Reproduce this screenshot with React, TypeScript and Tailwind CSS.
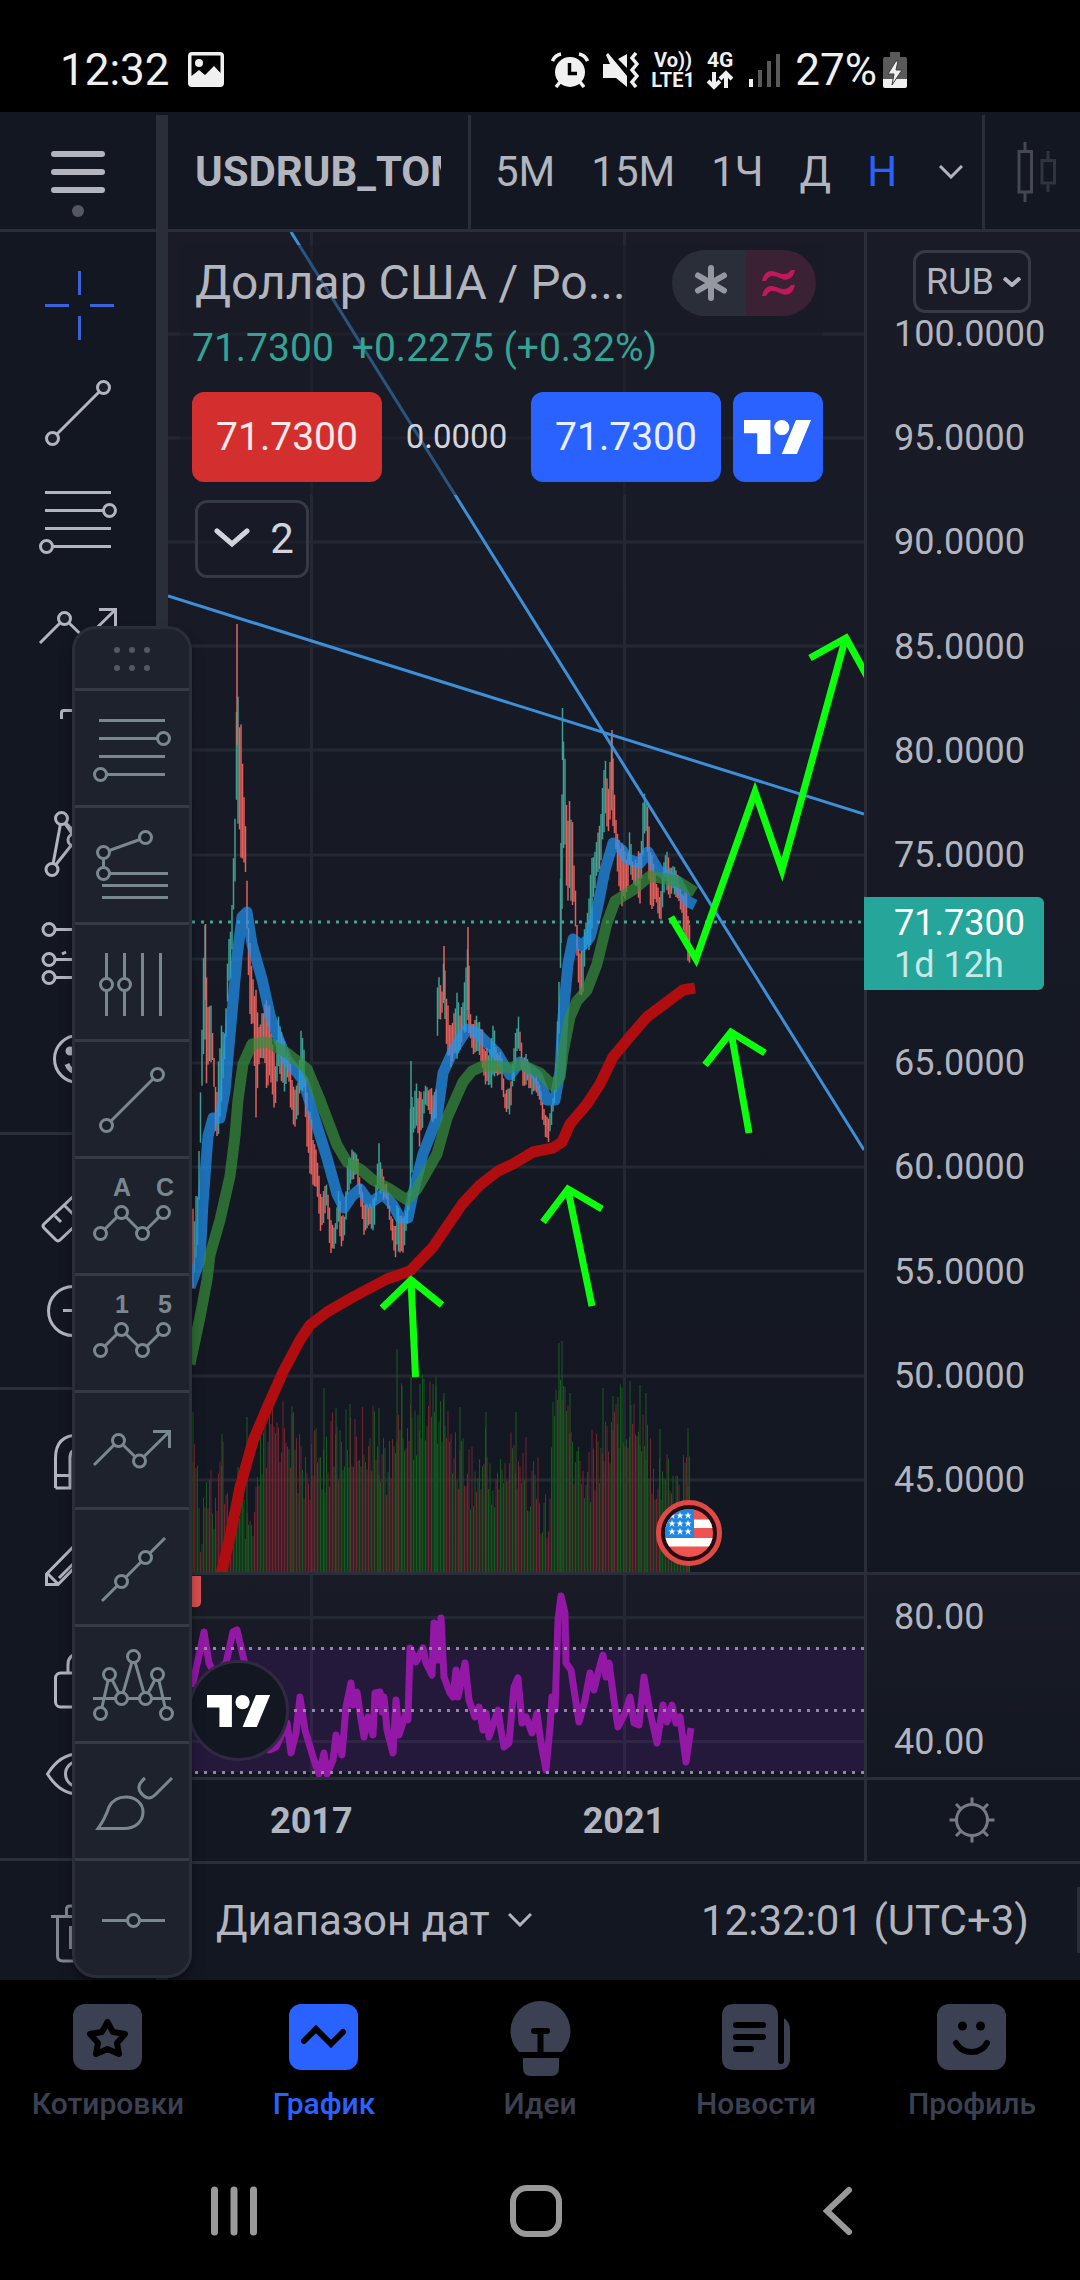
import { ReactNode } from "react";

type Point = [number, number];

const intervals = ["5М", "15М", "1Ч", "Д", "Н"];

const prices = [
  "100.0000",
  "95.0000",
  "90.0000",
  "85.0000",
  "80.0000",
  "75.0000",
  "",
  "65.0000",
  "60.0000",
  "55.0000",
  "50.0000",
  "45.0000",
];

// x, high, low
const range: [number, number, number][] = [
  [193, 1216, 1296], [198, 1190, 1238], [201, 1070, 1122], [203, 975, 1073],
  [205, 924, 1069], [207, 984, 1091], [210, 997, 1064], [213, 1029, 1069],
  [216, 1096, 1145], [219, 1051, 1127], [222, 1020, 1091], [225, 1033, 1060],
  [228, 948, 993], [231, 928, 975], [234, 850, 904], [236, 792, 850],
  [237, 624, 792], [239, 703, 859], [242, 736, 843], [243, 785, 861],
  [246, 828, 890], [248, 908, 970], [250, 939, 1015], [253, 975, 1024],
  [256, 984, 1109], [258, 1024, 1073], [263, 1011, 1055], [267, 1004, 1091],
  [270, 1011, 1093], [273, 1046, 1100], [276, 1060, 1109], [278, 1015, 1064],
  [282, 1037, 1095], [285, 1046, 1091], [288, 1055, 1073], [291, 1069, 1113],
  [294, 1091, 1129], [298, 1082, 1113], [301, 1033, 1091], [304, 1051, 1091],
  [307, 1095, 1149], [312, 1127, 1185], [317, 1158, 1189], [321, 1198, 1238],
  [324, 1189, 1220], [327, 1176, 1211], [330, 1216, 1252], [335, 1225, 1254],
  [338, 1189, 1225], [342, 1218, 1249], [345, 1211, 1234], [348, 1158, 1194],
  [352, 1149, 1180], [357, 1149, 1176], [360, 1180, 1203], [364, 1203, 1234],
  [370, 1203, 1225], [374, 1198, 1229], [377, 1171, 1189], [379, 1147, 1189],
  [383, 1176, 1198], [387, 1185, 1203], [392, 1220, 1243], [395, 1225, 1258],
  [398, 1198, 1247], [402, 1220, 1258], [407, 1203, 1229], [409, 1194, 1211],
  [411, 1061, 1207], [413, 1104, 1140], [416, 1078, 1127], [419, 1095, 1145],
  [423, 1095, 1127], [426, 1078, 1104], [429, 1091, 1113], [432, 1087, 1131],
  [436, 1091, 1118], [437, 986, 1037], [439, 979, 1024], [442, 988, 1015],
  [444, 946, 1011], [446, 988, 1037], [449, 1020, 1064], [453, 1015, 1064],
  [457, 995, 1060], [461, 1011, 1046], [465, 975, 1033], [468, 927, 1024],
  [470, 1015, 1037], [473, 1020, 1055], [477, 1017, 1051], [482, 1029, 1064],
  [485, 1046, 1091], [490, 1051, 1087], [493, 1020, 1087], [497, 1053, 1075],
  [501, 1048, 1080], [505, 1089, 1113], [510, 1089, 1113], [513, 1053, 1089],
  [517, 1022, 1053], [519, 1017, 1044], [523, 1057, 1091], [527, 1053, 1084],
  [532, 1075, 1093], [537, 1075, 1093], [541, 1089, 1106], [543, 1106, 1124],
  [548, 1120, 1147], [552, 1102, 1120], [555, 1084, 1102], [557, 1039, 1089],
  [559, 981, 1044], [561, 843, 943], [563, 708, 892], [564, 722, 814],
  [567, 812, 905], [570, 798, 901], [573, 834, 905], [576, 892, 928],
  [578, 946, 981], [580, 955, 999], [583, 946, 990], [587, 910, 946],
  [591, 865, 946], [593, 861, 901], [597, 834, 883], [600, 825, 874],
  [603, 781, 839], [605, 751, 816], [608, 789, 830], [612, 730, 816],
  [615, 810, 834], [618, 839, 883], [622, 839, 901], [627, 861, 892],
  [630, 823, 870], [633, 865, 888], [637, 856, 890], [641, 852, 905],
  [642, 812, 861], [645, 790, 830], [648, 807, 861], [651, 852, 917],
  [655, 870, 901], [660, 897, 926], [662, 883, 914], [665, 847, 879],
  [669, 861, 901], [675, 861, 892], [680, 888, 905], [683, 892, 923],
  [687, 881, 963], [689, 928, 975], [691, 910, 946],
];

const volumeTops: Point[] = [
  [192, 1433], [201, 1517], [207, 1467], [216, 1513], [223, 1467],
  [233, 1533], [239, 1487], [244, 1527], [255, 1533], [260, 1460],
  [273, 1433], [287, 1420], [301, 1467], [316, 1460], [330, 1447],
  [351, 1440], [366, 1433], [380, 1443], [391, 1473], [398, 1410],
  [409, 1427], [423, 1407], [437, 1403], [451, 1440], [466, 1460],
  [476, 1480], [487, 1453], [494, 1487], [505, 1467], [516, 1450],
  [533, 1480], [544, 1500], [547, 1553], [553, 1417], [562, 1373],
  [569, 1440], [580, 1467], [594, 1460], [605, 1440], [616, 1410],
  [633, 1413], [644, 1420], [655, 1467], [673, 1477], [680, 1487], [689, 1453],
];

const volumeSpikes: Point[] = [
  [193, 1412], [222, 1434], [247, 1417], [292, 1406], [324, 1388],
  [336, 1408], [350, 1404], [379, 1408], [397, 1349], [402, 1386],
  [411, 1377], [420, 1384], [436, 1387], [444, 1393], [460, 1407],
  [486, 1412], [516, 1412], [559, 1343], [562, 1341], [570, 1393],
  [603, 1388], [613, 1396], [618, 1397], [630, 1381], [640, 1385],
  [646, 1393], [660, 1429], [688, 1428],
];

const blueAverage: Point[] = [
  [190, 1287], [200, 1260], [203, 1203], [208, 1136], [213, 1118],
  [220, 1118], [225, 1091], [229, 1046], [233, 1002], [237, 957],
  [242, 917], [247, 912], [252, 944], [262, 979], [270, 1015], [277, 1035],
  [287, 1060], [303, 1080], [313, 1113], [327, 1158], [337, 1194],
  [344, 1208], [352, 1196], [360, 1189], [370, 1203], [383, 1194],
  [393, 1205], [400, 1218], [408, 1218], [413, 1194], [423, 1154],
  [437, 1118], [443, 1073], [453, 1051], [467, 1029], [477, 1033],
  [497, 1053], [510, 1075], [520, 1062], [537, 1075], [547, 1100],
  [555, 1100], [560, 1071], [563, 1017], [568, 964], [573, 939],
  [582, 946], [590, 937], [597, 910], [605, 870], [613, 843], [622, 850],
  [627, 859], [640, 863], [648, 852], [658, 870], [677, 881], [687, 901],
  [695, 905],
];

const greenAverage: Point[] = [
  [190, 1364], [200, 1317], [207, 1280], [210, 1255], [220, 1220],
  [230, 1176], [235, 1136], [238, 1100], [243, 1064], [252, 1044],
  [267, 1042], [287, 1053], [307, 1069], [320, 1100], [337, 1145],
  [347, 1162], [360, 1169], [373, 1180], [390, 1189], [407, 1200],
  [417, 1189], [437, 1154], [447, 1118], [463, 1082], [472, 1071],
  [483, 1066], [497, 1066], [510, 1068], [520, 1064], [540, 1073],
  [553, 1086], [560, 1077], [563, 1053], [570, 1017], [577, 1001],
  [587, 990], [597, 964], [607, 923], [615, 901], [633, 890], [650, 876],
  [677, 881], [695, 892],
];

const redAverage: Point[] = [
  [221, 1574], [230, 1537], [240, 1487], [253, 1441], [267, 1408],
  [283, 1372], [300, 1340], [310, 1325], [327, 1312], [353, 1297],
  [387, 1279], [410, 1271], [433, 1247], [463, 1203], [480, 1185],
  [498, 1171], [513, 1164], [533, 1152], [553, 1148], [562, 1142],
  [570, 1124], [587, 1104], [600, 1084], [613, 1057], [633, 1033],
  [647, 1017], [667, 1002], [683, 990], [695, 988],
];

const rsi: Point[] = [
  [192, 1687], [198, 1660], [204, 1632], [209, 1663], [214, 1673],
  [226, 1663], [233, 1632], [237, 1630], [244, 1660], [252, 1690],
  [269, 1750], [276, 1747], [287, 1723], [291, 1753], [296, 1733],
  [300, 1697], [305, 1730], [314, 1760], [319, 1774], [324, 1753],
  [327, 1774], [333, 1760], [336, 1735], [342, 1755], [346, 1707],
  [351, 1683], [353, 1705], [357, 1692], [360, 1713], [364, 1737],
  [368, 1717], [373, 1735], [375, 1693], [380, 1692], [382, 1712],
  [384, 1697], [387, 1730], [393, 1753], [396, 1700], [399, 1735],
  [406, 1713], [408, 1720], [410, 1648], [416, 1662], [423, 1648],
  [426, 1663], [432, 1675], [434, 1623], [438, 1660], [441, 1618],
  [444, 1677], [450, 1693], [453, 1697], [456, 1670], [458, 1697],
  [465, 1663], [469, 1700], [475, 1717], [479, 1707], [483, 1730],
  [486, 1713], [489, 1737], [498, 1710], [501, 1730], [504, 1747],
  [509, 1743], [514, 1687], [518, 1678], [522, 1723], [526, 1717],
  [532, 1733], [537, 1713], [541, 1743], [546, 1770], [550, 1727],
  [552, 1697], [555, 1710], [558, 1620], [561, 1596], [565, 1613],
  [566, 1663], [571, 1670], [579, 1722], [585, 1700], [590, 1673],
  [594, 1690], [598, 1673], [603, 1655], [606, 1677], [609, 1663],
  [614, 1700], [618, 1727], [625, 1713], [630, 1697], [634, 1723],
  [639, 1725], [644, 1677], [649, 1707], [657, 1743], [663, 1705],
  [667, 1722], [672, 1705], [676, 1723], [680, 1717], [686, 1762],
  [691, 1728],
];

const line = (points: Point[]) => points.map((p) => p.join(",")).join(" ");

const noise = (n: number) => {
  const v = Math.sin(n * 12.9898) * 43758.5453;
  return v - Math.floor(v);
};

const valueAt = (points: Point[], x: number) => {
  const i = points.findIndex((p) => p[0] >= x);
  if (i <= 0) return points[i === 0 ? 0 : points.length - 1][1];
  const [x0, y0] = points[i - 1];
  const [x1, y1] = points[i];
  return y0 + ((y1 - y0) * (x - x0)) / (x1 - x0);
};

const highs = range.map((r) => [r[0], r[1]] as Point);
const lows = range.map((r) => [r[0], r[2]] as Point);

const candles = Array.from({ length: 332 }, (_, i) => {
  const x = 193 + i * 1.5;
  const high = valueAt(highs, x);
  const low = valueAt(lows, x);
  const size = low - high;
  const top = high + (noise(i) - 0.3) * size * 0.3;
  const bottom = low - (noise(i + 500) - 0.3) * size * 0.3;
  const before = valueAt(highs, x - 3) + valueAt(lows, x - 3);
  const up = high + low + (noise(i + 90) - 0.5) * 60 < before;
  return { x, high: top, low: bottom, up };
});

const volumes = Array.from({ length: 332 }, (_, i) => {
  const x = 193 + i * 1.5;
  const top = valueAt(volumeTops, x) + (noise(i + 31) - 0.45) * 75;
  return { x, top: Math.min(top, 1560), up: noise(i + 7) > 0.5 };
});

const Dot = ({ x, y }: { x: number; y: number }) => (
  <circle cx={x} cy={y} r="6" className="fill-[#1a1e29]" />
);

const Icon = ({ children }: { children: ReactNode }) => (
  <svg
    className="h-[84px] w-[84px] shrink-0"
    viewBox="0 0 84 84"
    fill="none"
    stroke="currentColor"
    strokeWidth="3"
  >
    {children}
  </svg>
);

const FibIcon = () => (
  <Icon>
    <path d="M9 14.5H75M9 32.5H70M9 50.5H75M12 68.5H75" />
    <Dot x={73.5} y={32.5} />
    <Dot x={10.5} y={68.5} />
  </Icon>
);

const TrendIcon = () => (
  <Icon>
    <path d="M16.5 68.5L67.5 17.5" />
    <Dot x={67.5} y={17.5} />
    <Dot x={16.5} y={68.5} />
  </Icon>
);

const ArrowPathIcon = () => (
  <Icon>
    <path d="M4 57L28.5 32.5L49.5 53L79 24M63 23.5H79.5V40" />
    <Dot x={28.5} y={32.5} />
    <Dot x={49.5} y={53} />
  </Icon>
);

const WaveIcon = ({ first, last }: { first: string; last: string }) => (
  <Icon>
    <path d="M10.5 59.5L31.5 38.5L52.5 59.5L73.5 38.5" />
    <Dot x={10.5} y={59.5} />
    <Dot x={31.5} y={38.5} />
    <Dot x={52.5} y={59.5} />
    <Dot x={73.5} y={38.5} />
    <g
      className="fill-current font-['Liberation_Sans'] text-[25px] font-bold"
      stroke="none"
      textAnchor="middle"
    >
      <text x="32" y="22">
        {first}
      </text>
      <text x="75" y="22">
        {last}
      </text>
    </g>
  </Icon>
);

const Logo = ({ className }: { className?: string }) => (
  <svg className={className} viewBox="0 0 36 18" fill="white">
    <path d="M14 18H7V7H0V0h14v18zM28 18h-8l7.500-18h8L28 18z" />
    <circle cx="20" cy="4" r="4" />
  </svg>
);

const Chevron = ({ className }: { className?: string }) => (
  <svg
    className={className}
    viewBox="0 0 24 14"
    fill="none"
    stroke="currentColor"
    strokeWidth="3"
  >
    <path d="M1 1L12 12L23 1" />
  </svg>
);

const ToolButton = ({
  label,
  children,
}: {
  label: string;
  children: ReactNode;
}) => (
  <button
    aria-label={label}
    className="flex h-[108px] w-full items-center justify-center"
  >
    {children}
  </button>
);

const StatusBar = () => (
  <div className="flex h-28 items-center pt-7 pr-[173px] pl-[60px] text-[44px] leading-none text-[#f0f0f0]">
    <span>12:32</span>
    <svg className="ml-[18px] h-9 w-9" viewBox="0 0 36 36">
      <path
        fill="currentColor"
        fillRule="evenodd"
        d="M4 0H32a4 4 0 0 1 4 4V31a4 4 0 0 1-4 4H4a4 4 0 0 1-4-4V4a4 4 0 0 1 4-4ZM3.500 3.500V24L11 18L17 23L26 14L32.500 21V3.500Z"
      />
      <circle cx="11" cy="11" r="4" fill="currentColor" />
    </svg>
    <div className="ml-auto flex items-center">
      <svg
        className="h-9 w-[38px]"
        viewBox="0 0 38 36"
        fill="none"
        stroke="currentColor"
        strokeWidth="3.500"
      >
        <circle cx="19" cy="20" r="15" fill="currentColor" stroke="none" />
        <path d="M1.500 9Q4 3 10 2M36.500 9Q34 3 28 2M9 30L5 35M29 30L33 35" />
        <path d="M18.500 11V21.500H26" stroke="black" />
      </svg>
      <svg
        className="ml-3.5 h-9 w-9"
        viewBox="0 0 36 36"
        fill="none"
        stroke="currentColor"
        strokeWidth="3.500"
      >
        <path
          d="M0 12H7L3 3L5 1L24 24V35L13 26H0ZM24 2V16L15 7Z"
          fill="currentColor"
          stroke="none"
        />
        <path d="M33 1L29 6L34 12L29 18L34 24L29 30L33 35" />
      </svg>
      <div className="ml-3 flex flex-col text-[20px] leading-5 font-bold">
        <span className="text-center">Vo))</span>
        <span>LTE1</span>
      </div>
      <div className="ml-3 flex flex-col items-center text-[21px] leading-5 font-bold">
        <span>4G</span>
        <svg
          className="h-5 w-[26px]"
          viewBox="0 0 26 20"
          fill="none"
          stroke="currentColor"
          strokeWidth="4"
        >
          <path d="M7 2V16M1 11L7 17L13 11M19 18V4M13 9L19 3L25 9" />
        </svg>
      </div>
      <svg className="ml-4 h-9 w-8" viewBox="0 0 32 36">
        <path fill="#f0f0f0" d="M0 27h4v8h-4z" />
        <path fill="#5a5a5a" d="M9 18h4v17h-4zM18 9h4v26h-4zM27 2h4v33h-4z" />
      </svg>
      <span className="ml-3.5">27%</span>
      <svg className="ml-1.5 h-9 w-6" viewBox="0 0 24 36">
        <path
          fill="#5a5a5a"
          d="M7 0h10v5h5a2 2 0 0 1 2 2V27H0V7a2 2 0 0 1 2-2h5Z"
        />
        <path fill="#f0f0f0" d="M0 27H24V34a2 2 0 0 1-2 2H2a2 2 0 0 1-2-2Z" />
        <path
          fill="#f0f0f0"
          stroke="#3c3c3c"
          d="M13 9L5 22H11L9 33L19 18H13L15 9Z"
        />
      </svg>
    </div>
  </div>
);

const Sidebar = () => (
  <aside className="w-[156px] shrink-0">
    <button
      aria-label="Меню"
      className="flex h-[120px] w-full flex-col items-center border-b-3 border-[#2a2e39] pt-[39px]"
    >
      <span className="h-1.5 w-[54px] rounded-sm bg-[#b2b5be]" />
      <span className="mt-3 h-1.5 w-[54px] rounded-sm bg-[#b2b5be]" />
      <span className="mt-3 h-1.5 w-[54px] rounded-sm bg-[#b2b5be]" />
      <span className="mt-3 h-3 w-3 rounded-full bg-[#555862]" />
    </button>
    <div className="border-b-3 border-[#2a2e39] py-[18px]">
      <ToolButton label="Перекрестие">
        <Icon>
          <path
            className="stroke-[#3a62dd]"
            d="M43.500 9V33M43.500 54V78M9 43.500H33M54 43.500H78"
          />
        </Icon>
      </ToolButton>
      <ToolButton label="Линия тренда">
        <TrendIcon />
      </ToolButton>
      <ToolButton label="Коррекция Фибоначчи">
        <FibIcon />
      </ToolButton>
      <ToolButton label="Путь">
        <ArrowPathIcon />
      </ToolButton>
      <ToolButton label="Текст">
        <Icon>
          <path d="M25.500 25V19Q25.500 16.500 28 16.500H58Q61 16.500 61 19V25M43 16V68" />
        </Icon>
      </ToolButton>
      <ToolButton label="Фигуры">
        <Icon>
          <path d="M25.500 16.500L16 67.500L40 37.500ZM25.500 16.500L68 60" />
          <Dot x={25.5} y={16.5} />
          <Dot x={16} y={67.5} />
          <Dot x={38} y={38} />
        </Icon>
      </ToolButton>
      <ToolButton label="Прогноз">
        <Icon>
          <path d="M13 19.500H70M13 49.500H70M13 67.500H70M26 44L30 42" />
          <Dot x={13} y={19.5} />
          <Dot x={13} y={49.5} />
          <Dot x={13} y={67.5} />
        </Icon>
      </ToolButton>
      <ToolButton label="Значки">
        <Icon>
          <circle cx="42" cy="41" r="23.500" />
          <circle cx="34" cy="33" r="3" fill="currentColor" />
          <path d="M31 46Q34 54 42 54" strokeWidth="5" />
        </Icon>
      </ToolButton>
    </div>
    <div className="border-b-3 border-[#2a2e39] py-[18px]">
      <ToolButton label="Линейка">
        <Icon>
          <path d="M60 10L8 59Q6 61 8 63L20 75Q22 77 24 75L76 26M19 51L25 57M29 41L37 49" />
        </Icon>
      </ToolButton>
      <ToolButton label="Масштаб">
        <Icon>
          <circle cx="37" cy="38" r="24.500" />
          <path d="M27 37.500H48M55 56L72 73" />
        </Icon>
      </ToolButton>
    </div>
    <div className="border-b-3 border-[#2a2e39] py-[18px]">
      <ToolButton label="Магнит">
        <Icon>
          <path d="M19.500 68V38Q19.500 15 43 15Q66 15 66 38V68H53V38Q53 29 43 29Q34 29 34 38V68H19.500M19.500 55.500H34" />
        </Icon>
      </ToolButton>
      <ToolButton label="Рисование">
        <Icon>
          <path d="M10.500 56.500V46L46 10L57 21L22 56.500ZM11 45L22 56M23 50L44 29" />
        </Icon>
      </ToolButton>
      <ToolButton label="Закрепить">
        <Icon>
          <rect x="19.500" y="37" width="48" height="34" rx="5" />
          <path d="M32 37V29Q32 18 43 18Q54 18 54 29" />
        </Icon>
      </ToolButton>
      <ToolButton label="Показать">
        <Icon>
          <path d="M11.500 30Q24 10 42 10Q60 10 73 30Q60 50 42 50Q24 50 11.500 30Z" />
          <circle cx="42" cy="30" r="12.500" />
        </Icon>
      </ToolButton>
    </div>
    <button
      aria-label="Удалить"
      className="flex w-full justify-center pt-[30px] opacity-70"
    >
      <Icon>
        <path d="M15 25.500H70M21.500 26V65Q21.500 70 27 70H58Q63 70 63 65V26M30.500 25V18Q30.500 15 34 15H50Q54 15 54 18V25M34.500 35V58" />
      </Icon>
    </button>
  </aside>
);

const favorites: { label: string; icon: ReactNode }[] = [
  { label: "Коррекция по Фибоначчи", icon: <FibIcon /> },
  {
    label: "Расширение Фибоначчи",
    icon: (
      <Icon>
        <path d="M55.500 14.500L13.500 29.500V50.500H78M12 62.500H78M12 74.500H78" />
        <Dot x={55.5} y={14.5} />
        <Dot x={13.5} y={29.5} />
        <Dot x={13.5} y={50.5} />
      </Icon>
    ),
  },
  {
    label: "Временные периоды",
    icon: (
      <Icon>
        <path d="M16.500 13V76M34.500 13V76M52.500 13V76M70.500 13V76" />
        <Dot x={16.5} y={44.5} />
        <Dot x={34.5} y={44.5} />
      </Icon>
    ),
  },
  { label: "Линия", icon: <TrendIcon /> },
  { label: "Коррекция ABC", icon: <WaveIcon first="A" last="C" /> },
  { label: "Импульс 12345", icon: <WaveIcon first="1" last="5" /> },
  { label: "Ломаная", icon: <ArrowPathIcon /> },
  {
    label: "Прямая",
    icon: (
      <Icon>
        <path d="M12 76L75 13" />
        <Dot x={55.5} y={32.5} />
        <Dot x={31.5} y={56.5} />
      </Icon>
    ),
  },
  {
    label: "Голова и плечи",
    icon: (
      <Icon>
        <path d="M3 56.500H81M10.500 71.500L19.500 32.500L31.500 56.500L43.500 14.500L55.500 56.500L67.500 32.500L76.500 71.500" />
        <Dot x={10.5} y={71.5} />
        <Dot x={19.5} y={32.5} />
        <Dot x={31.5} y={56.5} />
        <Dot x={43.5} y={14.5} />
        <Dot x={55.5} y={56.5} />
        <Dot x={67.5} y={32.5} />
        <Dot x={76.5} y={71.5} />
      </Icon>
    ),
  },
  {
    label: "Кисть",
    icon: (
      <Icon>
        <path d="M8 69.500H34C46 69.500 53 62 53 53C53 44 45 38 36 38C27 38 22 42 19 48C16 57 12 64 8 69.500Z" />
        <path d="M82 19L65 36C60 41 55 39 51 34C47 29 49 24 55 19" />
      </Icon>
    ),
  },
  {
    label: "Горизонтальная линия",
    icon: (
      <Icon>
        <path d="M12 44.500H75" />
        <Dot x={43.5} y={44.5} />
      </Icon>
    ),
  },
];

const FavoritesToolbar = () => (
  <div className="absolute top-[514px] left-[72px] z-10 w-[120px] rounded-3xl border-3 border-[#2a2e39] bg-[#1e222d] text-[#7a8791] shadow-lg shadow-black/40">
    <div className="flex h-[59px] items-center justify-center">
      <div className="grid grid-cols-3 gap-x-[9px] gap-y-3">
        {Array.from({ length: 6 }, (_, i) => (
          <span key={i} className="h-1.5 w-1.5 rounded-full bg-[#555862]" />
        ))}
      </div>
    </div>
    {favorites.map((tool) => (
      <button
        key={tool.label}
        aria-label={tool.label}
        className="flex h-[117px] w-full items-center justify-center border-t-3 border-[#363a45]"
      >
        {tool.icon}
      </button>
    ))}
  </div>
);

const ChartHeader = () => (
  <header className="flex h-[120px] border-b-3 border-[#2a2e39] pt-[3px] text-[42px] leading-none">
    <button className="w-[303px] shrink-0 border-r-3 border-[#2a2e39] pr-[27px] pl-[27px] text-left font-bold">
      <span className="block overflow-hidden">USDRUB_TOM</span>
    </button>
    <div className="flex shrink-0 items-center gap-9 border-r-3 border-[#2a2e39] pr-[19px] pl-6">
      {intervals.map((interval) => (
        <button
          key={interval}
          className={interval === "Н" ? "text-[#2962ff]" : ""}
        >
          {interval}
        </button>
      ))}
      <button aria-label="Интервалы" className="pl-1.5">
        <Chevron className="h-3.5 w-6" />
      </button>
    </div>
    <button aria-label="Вид графика" className="ml-[30px] text-[#454852]">
      <svg
        className="h-[62px] w-11"
        viewBox="0 0 44 62"
        fill="none"
        stroke="currentColor"
        strokeWidth="3"
      >
        <path d="M4 10.500H16.500V51H4ZM10 1V10M10 51V61" />
        <path
          d="M27 19.500H39.500V42H27ZM33 10V19M33 42V51"
          className="opacity-60"
        />
      </svg>
    </button>
  </header>
);

const Legend = () => (
  <div className="absolute top-[13px] left-3">
    <div className="bg-[#171a25]/50 pt-[5px] pb-[13px] pl-3">
      <div className="flex h-[66px] items-center pl-[3px]">
        <h1 className="w-[477px] truncate text-[48px] leading-[56px]">
          Доллар США / Ро...
        </h1>
        <div className="flex h-full w-36 overflow-hidden rounded-full">
          <span className="flex flex-1 items-center justify-center bg-[#2a2e39] pl-1">
            <svg
              className="h-9 w-9"
              viewBox="0 0 36 36"
              stroke="#9598a1"
              strokeWidth="6"
              strokeLinecap="round"
            >
              <path d="M18 3V33M5 10.500L31 25.500M31 10.500L5 25.500" />
            </svg>
          </span>
          <span className="flex flex-1 items-center justify-center bg-[#3a2133]">
            <svg className="mr-1.5 h-8 w-9" viewBox="0 0 36 32" fill="#c2185b">
              <path d="M2 14C4 5 9 2 16 5C23 8 28 8 31 3H35C33 12 27 15 20 11C13 8 9 8 6 14Z" />
              <path d="M2 29C4 20 9 17 16 20C23 23 28 23 31 18H35C33 27 27 30 20 26C13 23 9 23 6 29Z" />
            </svg>
          </span>
        </div>
      </div>
      <p className="mt-[9px] flex gap-[18px] text-[39px] leading-[46px] text-[#34a395]">
        <span>71.7300</span>
        <span>+0.2275 (+0.32%)</span>
      </p>
      <div className="mt-[21px] flex h-[90px] items-center text-[39px]">
        <button className="h-full w-[190px] rounded-xl bg-[#d32f2f] text-white/90">
          71.7300
        </button>
        <span className="w-[149px] text-center text-[33px] text-[#d1d4dc]">
          0.0000
        </span>
        <button className="h-full w-[190px] rounded-xl bg-[#2962ff] text-white/90">
          71.7300
        </button>
        <button
          aria-label="TradingView"
          className="ml-3 flex h-full w-[90px] items-center justify-center rounded-xl bg-[#2962ff]"
        >
          <Logo className="h-[34px] w-[68px]" />
        </button>
      </div>
    </div>
    <button className="mt-[5px] ml-[15px] flex h-[78px] w-[114px] items-center justify-center gap-5 rounded-xl border-3 border-[#363a45] bg-[#171a25]/50 pb-0.5 pl-1 text-[42px] text-[#d1d4dc]">
      <svg
        className="h-5 w-9"
        viewBox="0 0 36 20"
        fill="none"
        stroke="currentColor"
        strokeWidth="5"
        strokeLinecap="round"
      >
        <path d="M3 3L18 16L33 3" />
      </svg>
      2
    </button>
  </div>
);

const PriceChart = () => (
  <svg
    className="block h-full w-full"
    viewBox="168 232 696 1340"
    preserveAspectRatio="none"
    fill="none"
  >
    <g className="stroke-[#242833]" strokeWidth="3">
      {prices.map((_, i) => (
        <path key={i} d={`M168 ${Math.round(333.5 + i * 104.2)}H864`} />
      ))}
      <path d="M311.500 232V1572M624.500 232V1572" />
    </g>
    <g strokeWidth="1">
      {volumes.map((v) => (
        <path
          key={v.x}
          d={`M${v.x} 1572V${v.top}`}
          stroke={v.up ? "#14591c" : "#6f242e"}
        />
      ))}
      {volumeSpikes.map(([x, y]) => (
        <path key={x} d={`M${x} 1572V${y}`} stroke="#1b5a25" />
      ))}
    </g>
    <path
      d="M192 922H864"
      className="stroke-[#3fa596]"
      strokeWidth="3"
      strokeDasharray="3 6"
    />
    <g strokeWidth="1.500">
      {candles.map((c) => (
        <path
          key={c.x}
          d={`M${c.x} ${c.high}V${c.low}`}
          stroke={c.up ? "#3f9f92" : "#e0605d"}
        />
      ))}
      <path d="M205.500 924V1000M237 624V745M468 927V1020M444 946V1000M612 730V790" stroke="#e06562" />
      <path d="M411 1061V1160M562.500 708V760M561 843V943" stroke="#3f9f92" />
    </g>
    <g strokeWidth="11" strokeLinejoin="round">
      <polyline
        points={line(blueAverage)}
        stroke="#2196f3"
        className="opacity-70"
      />
      <polyline
        points={line(greenAverage)}
        stroke="#388e3c"
        className="opacity-70"
      />
      <polyline points={line(redAverage)} stroke="#b00d11" />
    </g>
    <g className="stroke-[#3d8fd9]" strokeWidth="3">
      <path d="M168 596L864 814M291 232L864 1150" />
    </g>
    <g className="stroke-[#0dff0d]" strokeWidth="7">
      <path d="M671 917L696 959L755 792L782 870L845 640" />
      <path d="M810 658L846 638L868 678" />
      <path d="M415.500 1377L411 1280M382 1308L411 1280L442 1305" />
      <path d="M592 1306L568 1190M543 1222L568 1189L602 1209" />
      <path d="M749 1133L731 1032M705 1065L731 1032L765 1053" />
    </g>
    <circle cx="689" cy="1533" r="30.500" fill="#260b13" stroke="#e04a44" strokeWidth="5" />
    <clipPath id="flag">
      <circle cx="689" cy="1533" r="24" />
    </clipPath>
    <g clipPath="url(#flag)">
      <path d="M664 1509H714V1557H664Z" fill="#ef5350" />
      <path d="M664 1519.500H714V1528H664ZM664 1538H714V1546.500H664Z" fill="white" />
      <path d="M664 1509H694V1538H664Z" fill="#1e88e5" />
      <g fill="white">
        {[1515.5, 1523.5, 1531.5].map((y) =>
          [672, 680, 688].map((x) => (
            <path
              key={`${x}-${y}`}
              d={`M${x} ${y - 3.5}l1 2.500h2.500l-2 1.500l1 3l-2.500-2l-2.500 2l1-3l-2-1.500h2.500z`}
            />
          )),
        )}
      </g>
    </g>
  </svg>
);

const RsiChart = () => (
  <svg
    className="block h-full w-full"
    viewBox="168 1575 696 202"
    preserveAspectRatio="none"
    fill="none"
  >
    <path d="M168 1648H864V1772H168Z" fill="#24183b" />
    <path
      d="M168 1617.500H864M168 1741.500H864M311.500 1575V1777M624.500 1575V1777"
      strokeWidth="3"
      className="stroke-white/6"
    />
    <path
      d="M192 1576H201V1602Q201 1607 196 1607H192Z"
      fill="#d9504e"
    />
    <polyline
      points={line(rsi)}
      stroke="#9318a6"
      strokeWidth="7"
      strokeLinejoin="round"
    />
    <path
      d="M195 1648.500H864M195 1710.500H864M195 1772.500H864"
      className="stroke-[#8f8a9f]"
      strokeWidth="3"
      strokeDasharray="3 6"
    />
  </svg>
);

const PriceAxis = () => (
  <div className="relative flex w-[216px] shrink-0 flex-col border-l-3 border-[#2a2e39] pt-[18px] pb-[71px]">
    <label className="relative ml-[46px] h-[63px] w-[118px]">
      <select
        aria-label="Валюта"
        className="h-full w-full appearance-none rounded-xl border-3 border-[#363a45] bg-transparent pl-2.5 text-[36px] leading-none"
      >
        <option>RUB</option>
      </select>
      <svg
        className="absolute top-[27px] right-[10px] h-2.5 w-[18px]"
        viewBox="0 0 18 10"
        fill="none"
        stroke="currentColor"
        strokeWidth="4"
      >
        <path d="M1 1L9 8L17 1" />
      </svg>
    </label>
    <div className="flex flex-1 flex-col justify-between pl-[27px] text-[36px] leading-[42px]">
      {prices.map((price, i) => (
        <span key={i} className="h-[42px]">
          {price}
        </span>
      ))}
    </div>
    <div className="absolute top-[665px] -left-[3px] w-[180px] rounded-r-md bg-[#26a69a] pt-[5px] pb-1 pl-[30px] text-[36px] leading-[42px]">
      <p className="text-white">71.7300</p>
      <p className="text-white/75">1d 12h</p>
    </div>
  </div>
);

const Chart = () => (
  <div className="min-w-0 flex-1">
    <ChartHeader />
    <div className="flex h-[1340px] bg-linear-to-b from-[#191c27] to-[#131722]">
      <div className="relative min-w-0 flex-1">
        <PriceChart />
        <Legend />
      </div>
      <PriceAxis />
    </div>
    <div className="flex h-[208px] border-y-3 border-[#2a2e39] bg-linear-to-b from-[#191c27] to-[#131722]">
      <div className="relative min-w-0 flex-1">
        <RsiChart />
        <div className="absolute top-[85px] left-5 flex h-[101px] w-[101px] items-center justify-center rounded-full border-3 border-[#2f2a42] bg-[#131722]">
          <Logo className="h-8 w-16" />
        </div>
      </div>
      <div className="flex w-[216px] shrink-0 flex-col justify-between border-l-3 border-[#2a2e39] pt-[21px] pb-3.5 pl-[27px] text-[36px] leading-[42px]">
        <span>80.00</span>
        <span>40.00</span>
      </div>
    </div>
    <div className="flex h-[84px] border-b-3 border-[#2a2e39]">
      <div className="flex min-w-0 flex-1 items-center gap-[230px] pl-[102px] text-[36px] font-bold">
        <span>2017</span>
        <span>2021</span>
      </div>
      <button
        aria-label="Настройки"
        className="flex w-[216px] shrink-0 items-center justify-center border-l-3 border-[#2a2e39] pr-[3px] pb-0.5 text-[#787b86]"
      >
        <svg
          className="h-12 w-12"
          viewBox="0 0 48 48"
          fill="none"
          stroke="currentColor"
          strokeWidth="3"
        >
          <circle cx="24" cy="24" r="15.500" />
          <path d="M24 1.500V8M24 40V46.500M1.500 24H8M40 24H46.500M8 8L13 13M35 35L40 40M40 8L35 13M13 35L8 40" />
        </svg>
      </button>
    </div>
    <div className="flex h-[116px] items-center pb-1 pl-12 text-[42px]">
      <button className="flex items-center gap-[18px]">
        Диапазон дат
        <Chevron className="h-3.5 w-6" />
      </button>
      <button className="mr-12 ml-auto">12:32:01 (UTC+3)</button>
      <span className="h-[66px] w-[3px] bg-[#2a2e39]" />
    </div>
  </div>
);

const tabs: { label: string; active?: boolean; icon: ReactNode }[] = [
  {
    label: "Котировки",
    icon: (
      <>
        <rect x="1" y="4" width="69" height="66" rx="12" fill="currentColor" />
        <path
          d="M35.500 22L41 32L53 34L45 43L47 54L35.500 49L24 54L26 43L18 34L30 32Z"
          stroke="black"
          strokeWidth="6"
          strokeLinejoin="round"
        />
      </>
    ),
  },
  {
    label: "График",
    active: true,
    icon: (
      <>
        <rect x="1" y="4" width="69" height="66" rx="12" fill="currentColor" />
        <path
          d="M16 41L28 29L43 44L55 32"
          stroke="black"
          strokeWidth="6"
          strokeLinecap="round"
        />
      </>
    ),
  },
  {
    label: "Идеи",
    icon: (
      <>
        <path
          d="M15 52A30 30 0 1 1 58 52ZM19 58H55V68Q55 76 47 76H27Q19 76 19 68Z"
          fill="currentColor"
        />
        <path
          d="M30 31H43M36.500 31V54"
          stroke="black"
          strokeWidth="6"
          strokeLinecap="round"
        />
      </>
    ),
  },
  {
    label: "Новости",
    icon: (
      <>
        <path
          d="M14 4H46Q58 4 58 16V61Q58 64 61 64Q64 64 64 61V18Q70 22 70 30V58Q70 70 58 70H14Q2 70 2 58V16Q2 4 14 4Z"
          fill="currentColor"
        />
        <path
          d="M16 25H43M16 37H43M16 49H31"
          stroke="black"
          strokeWidth="6"
          strokeLinecap="round"
        />
      </>
    ),
  },
  {
    label: "Профиль",
    icon: (
      <>
        <rect x="1" y="4" width="69" height="66" rx="12" fill="currentColor" />
        <circle cx="26.500" cy="26" r="4.500" fill="black" />
        <circle cx="44.500" cy="26" r="4.500" fill="black" />
        <path
          d="M20 43Q25 52 35.500 52Q46 52 51 43"
          stroke="black"
          strokeWidth="6"
          strokeLinecap="round"
        />
      </>
    ),
  },
];

const TabBar = () => (
  <nav className="grid grid-cols-5 pt-5 text-[30px] leading-[34px] font-medium">
    {tabs.map((tab) => (
      <a
        key={tab.label}
        href="#"
        className={`flex flex-col items-center gap-[11px] ${
          tab.active ? "text-[#2962ff]" : "text-[#3b4052]"
        }`}
      >
        <svg className="h-[76px] w-[72px]" viewBox="0 0 72 76" fill="none">
          {tab.icon}
        </svg>
        {tab.label}
      </a>
    ))}
  </nav>
);

const SystemBar = () => (
  <div className="flex justify-between pt-[62px] pr-[214px] pl-[206px] text-[#999999]">
    <button aria-label="Недавние">
      <svg
        className="h-14 w-14"
        viewBox="0 0 56 56"
        stroke="currentColor"
        strokeWidth="7"
        strokeLinecap="round"
      >
        <path d="M8.500 7V49M28 7V49M47.500 7V49" />
      </svg>
    </button>
    <button aria-label="Домой">
      <svg className="h-14 w-14" viewBox="0 0 56 56" fill="none">
        <rect
          x="5"
          y="5"
          width="46"
          height="46"
          rx="14"
          stroke="currentColor"
          strokeWidth="6"
        />
      </svg>
    </button>
    <button aria-label="Назад">
      <svg
        className="h-14 w-14"
        viewBox="0 0 56 56"
        fill="none"
        stroke="currentColor"
        strokeWidth="6"
        strokeLinecap="round"
      >
        <path d="M39 7L17 28L39 49" />
      </svg>
    </button>
  </div>
);

const App = () => {
  return (
    <div className="min-h-screen bg-black font-[Roboto,sans-serif] text-[#b2b5be]">
      <StatusBar />
      <main className="relative flex bg-[#131722]">
        <Sidebar />
        <div className="mt-[3px] w-3 shrink-0 bg-[#2a2e39]" />
        <Chart />
        <FavoritesToolbar />
      </main>
      <TabBar />
      <SystemBar />
    </div>
  );
};

export default App;
